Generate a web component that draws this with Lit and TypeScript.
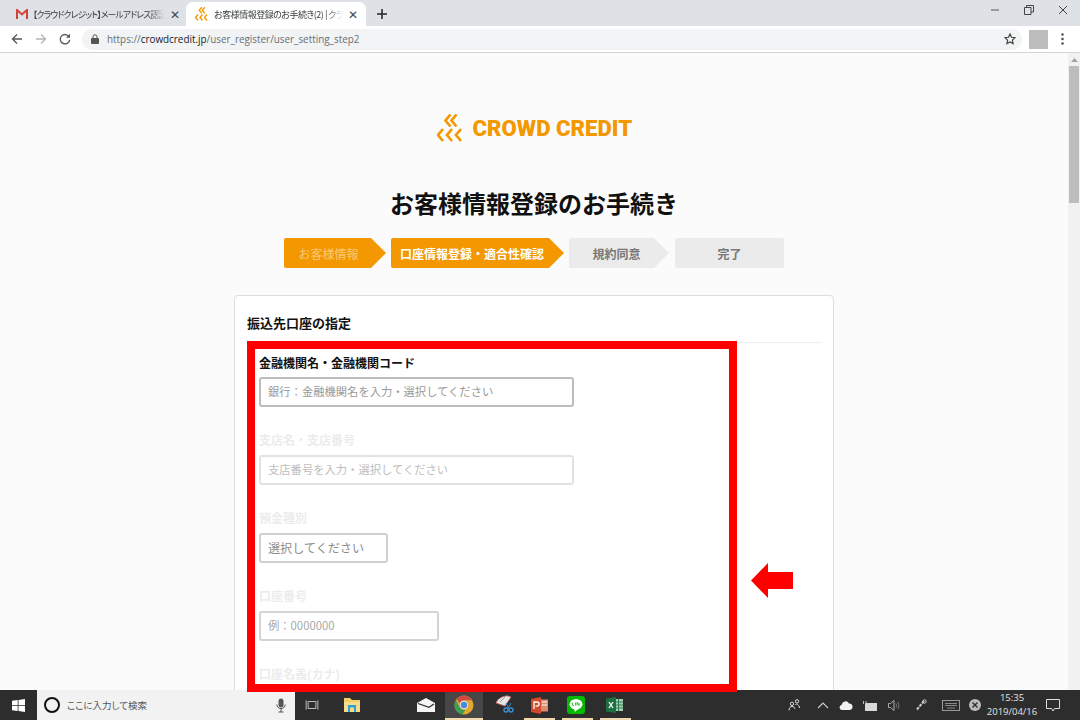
import { LitElement, html, css, svg } from "lit";
import { customElement } from "lit/decorators.js";

const logoMark = (w: number, h: number) => html`<svg width=${w} height=${h} viewBox="0 0 28 28">
  <g fill="none" stroke="#f39800" stroke-width="2.700">
    <path d="M13.500 .5L8.500 6.500l5 6M19.500 .5l-5 6 5 6" />
    <path d="M6 15L1 21l5 6M15 15l-5 6 5 6M24 15l-5 6 5 6" />
  </g>
</svg>`;

const gmail = html`<svg width="12" height="10" viewBox="0 0 12 10">
  <path d="M0 0h2v10H0zM10 0h2v10h-2z" fill="#c5453a" />
  <path d="M0 0h1.500L6 4 10.500 0H12v1.500L6 6.800 0 1.500z" fill="#d9473c" />
</svg>`;

const chromeIcon = html`<svg width="20" height="20" viewBox="0 0 20 20">
  <circle cx="10" cy="10" r="9.500" fill="#e0a92f" />
  <path d="M10 .5a9.500 9.500 0 0 1 8.200 4.700H10a5 5 0 0 0-4.500 2.800L2.600 3.900A9.500 9.500 0 0 1 10 .5z" fill="#cf4b3f" />
  <path d="M1.900 5a9.500 9.500 0 0 0 6.600 14.400l2.900-4.600a5 5 0 0 1-5.900-2.700z" fill="#3d9c58" />
  <circle cx="10" cy="10" r="4.200" fill="#e8e8e8" />
  <circle cx="10" cy="10" r="3.200" fill="#4a87e0" />
</svg>`;

const stroke = (d: unknown, w = 18, h = 18, vb = "0 0 18 18", c = "#c8c8c8") => html`<svg width=${w} height=${h} viewBox=${vb}>
  <g fill="none" stroke=${c} stroke-width="1.200">${d}</g>
</svg>`;

@customElement("app-root")
export class AppRoot extends LitElement {
  static styles = css`
    :host {
      display: flex;
      flex-direction: column;
      width: 1080px;
      height: 720px;
      overflow: hidden;
      position: relative;
      font-family: "Noto Sans CJK JP", "Noto Sans", sans-serif;
      color: #222;
    }

    /* browser chrome */
    .tabstrip {
      height: 26px;
      background: #dee1e6;
      display: flex;
      align-items: flex-end;
      flex: none;
    }
    .tab {
      height: 24px;
      width: 186px;
      box-sizing: border-box;
      display: flex;
      align-items: center;
      padding: 0 6px 0 16px;
      gap: 5px;
      font-size: 8.800px;
      letter-spacing: -0.850px;
      font-feature-settings: "palt";
      color: #3c4043;
      white-space: nowrap;
    }
    .tab.active {
      background: #fff;
      width: 180px;
      border-radius: 7px 7px 0 0;
      padding: 0 8px 0 9px;
      font-size: 9px;
      letter-spacing: -0.500px;
    }
    .tab .title {
      flex: 1;
      min-width: 0;
      -webkit-mask-image: linear-gradient(90deg, #000 88%, transparent);
      mask-image: linear-gradient(90deg, #000 88%, transparent);
    }
    .tab .close {
      font-size: 12px;
      line-height: 1;
      letter-spacing: 0;
      color: #44474b;
    }
    .newtab {
      width: 32px;
      height: 24px;
      display: flex;
      align-items: center;
      justify-content: center;
    }
    .winctl {
      margin-left: auto;
      display: flex;
      align-self: stretch;
    }
    .winctl div {
      width: 34px;
      display: flex;
      align-items: center;
      justify-content: center;
      padding-bottom: 6px;
    }
    .toolbar {
      height: 26px;
      background: #fff;
      border-bottom: 1px solid #d4d4d4;
      flex: none;
      display: flex;
      align-items: center;
      padding-left: 5px;
    }
    .navbtn {
      width: 24px;
      display: flex;
      justify-content: center;
    }
    .omni {
      margin-left: 5px;
      width: 940px;
      height: 21px;
      border-radius: 11px;
      background: #f1f3f4;
      display: flex;
      align-items: center;
      padding: 0 6px 0 9px;
      box-sizing: border-box;
      font-family: "Open Sans", sans-serif;
      font-size: 9.900px;
      color: #6b6f73;
      gap: 8px;
    }
    .omni b {
      font-weight: 400;
      color: #202124;
    }
    .omni .star {
      margin-left: auto;
    }
    .avatar {
      width: 19px;
      height: 19px;
      background: #bdbdbd;
      margin-left: 7px;
    }
    .dots {
      margin-left: 13px;
      display: flex;
    }

    /* page */
    .viewport {
      flex: 1;
      min-height: 0;
      display: flex;
      background: #fbfbfb;
    }
    .page {
      flex: 1;
      overflow: hidden;
      display: flex;
      flex-direction: column;
      align-items: center;
    }
    .page > * {
      flex: none;
    }
    .logo {
      margin-top: 59px;
      height: 32px;
      display: flex;
      align-items: center;
      gap: 8px;
    }
    .logo span {
      font-family: Roboto, sans-serif;
      font-weight: 900;
      font-size: 22.200px;
      color: #f39800;
      display: inline-block;
      width: 159px;
      white-space: nowrap;
    }
    h1 {
      margin: 41px 0 0;
      font-size: 24px;
      line-height: 36px;
      font-weight: 700;
      color: #111;
    }
    .steps {
      margin-top: 17px;
      display: flex;
      gap: 5px;
    }
    .step {
      height: 30px;
      box-sizing: border-box;
      display: flex;
      align-items: center;
      justify-content: center;
      font-size: 12px;
      font-weight: 700;
      border-radius: 2px;
      background: #ebebeb;
      color: #777;
      padding-right: 5px;
      clip-path: polygon(0 0, calc(100% - 15px) 0, 100% 50%, calc(100% - 15px) 100%, 0 100%);
    }
    .step.on {
      background: #f39800;
      color: #fff;
      padding-right: 11px;
    }
    .step.past {
      background: #f39800;
      color: #f9c877;
      font-weight: 400;
      padding-right: 13px;
    }
    .step.last {
      clip-path: none;
      padding-right: 0;
      margin-left: 1px;
    }
    .card {
      margin-top: 27px;
      width: 600px;
      min-height: 600px;
      box-sizing: border-box;
      background: #fff;
      border: 1px solid #ddd;
      border-radius: 4px;
      padding: 15px 12px 0;
    }
    h2 {
      margin: 0;
      font-size: 13px;
      line-height: 24px;
      font-weight: 700;
      color: #111;
      padding-bottom: 7px;
      border-bottom: 1px solid #eee;
    }
    .fields {
      padding: 9px 12px 0;
      display: flex;
      flex-direction: column;
      gap: 23px;
    }
    .field {
      display: flex;
      flex-direction: column;
      gap: 5px;
      align-items: flex-start;
    }
    .field:first-child {
      gap: 4px;
      padding-top: 1px;
    }
    .field label {
      font-size: 12px;
      line-height: 20px;
      font-weight: 700;
      color: #111;
    }
    .field.dim label {
      color: #ececec;
    }
    .input {
      height: 30px;
      box-sizing: border-box;
      border: 2px solid #bcbcbc;
      border-radius: 3px;
      padding: 0 7px 2px;
      display: flex;
      align-items: center;
      font-size: 11.300px;
      color: #9a9a9a;
      background: #fff;
    }
    .field.dim .input {
      border-color: #e2e2e2;
      color: #bdbdbd;
    }
    .w1 {
      width: 315px;
    }
    .w2 {
      width: 129px;
      font-size: 12.100px;
    }
    .field.dim .w2 {
      border-color: #cfcfcf;
      color: #8d8d8d;
    }
    .w3 {
      width: 180px;
    }
    .field.dim .w3 {
      border-color: #d4d4d4;
      color: #a8a8a8;
    }

    .scrollbar {
      width: 12px;
      background: #f1f1f1;
      flex: none;
      padding: 0 1px;
      box-sizing: border-box;
    }
    .scrollbar .up {
      height: 13px;
      display: flex;
      align-items: center;
      justify-content: center;
    }
    .scrollbar .thumb {
      height: 137px;
      background: #bdbdbd;
    }

    /* annotation */
    .redbox {
      position: absolute;
      left: 247px;
      top: 341px;
      width: 490px;
      height: 351px;
      box-sizing: border-box;
      border: 8px solid #f00;
      z-index: 3;
    }
    .arrow {
      position: absolute;
      left: 751px;
      top: 563px;
      z-index: 3;
    }

    /* taskbar */
    .taskbar {
      height: 30px;
      flex: none;
      background: #2d2d2d;
      display: flex;
      align-items: center;
      position: relative;
    }
    .start {
      width: 37px;
      display: flex;
      justify-content: center;
    }
    .search {
      width: 258px;
      height: 30px;
      background: #f2f2f2;
      box-sizing: border-box;
      display: flex;
      align-items: center;
      padding: 0 9px 0 7px;
      font-size: 9.500px;
      font-feature-settings: "palt";
      color: #555;
      gap: 6px;
    }
    .search .ring {
      width: 12px;
      height: 12px;
      border: 2.500px solid #111;
      border-radius: 50%;
      margin-right: 1px;
    }
    .search .mic {
      margin-left: auto;
      display: flex;
    }
    .cell {
      width: 38px;
      height: 30px;
      display: flex;
      align-items: center;
      justify-content: center;
      box-sizing: border-box;
      position: relative;
    }
    .cell.open::after {
      content: "";
      position: absolute;
      left: 3px;
      right: 4px;
      bottom: 0;
      height: 2px;
      background: #f5d9ae;
    }
    .cell.active {
      background: #474747;
    }
    .cell.active::after {
      left: 0;
      right: 0;
    }
    .folder {
      margin-right: 36px;
    }
    .tray {
      margin-left: auto;
      display: flex;
      align-items: center;
      color: #e6e6e6;
    }
    .tray .t {
      display: flex;
      justify-content: center;
      width: 24px;
    }
    .clock {
      width: 56px;
      font-family: "Open Sans", sans-serif;
      font-size: 9.500px;
      line-height: 14px;
      text-align: center;
      color: #e4e4e4;
    }
    .notif {
      width: 26px;
      margin-right: 14px;
      display: flex;
      justify-content: center;
    }
  `;

  render() {
    return html`
      <div class="tabstrip">
        <div class="tab">
          ${gmail}
          <span class="title">【クラウドクレジット】メールアドレス認証</span>
          <span class="close">✕</span>
        </div>
        <div class="tab active">
          ${logoMark(14, 14)}
          <span class="title">お客様情報登録のお手続き(2) | クラ</span>
          <span class="close">✕</span>
        </div>
        <div class="newtab">
          <svg width="12" height="12" viewBox="0 0 12 12"><path d="M6 1v10M1 6h10" stroke="#222" stroke-width="1.500" /></svg>
        </div>
        <div class="winctl">
          <div><svg width="10" height="10" viewBox="0 0 10 10"><path d="M1 5h8" stroke="#555" /></svg></div>
          <div><svg width="10" height="10" viewBox="0 0 10 10"><path d="M.5 2.500h6.500v7H.5zM2.500 2.500V.5h7v6.500H7" fill="none" stroke="#444" /></svg></div>
          <div><svg width="10" height="10" viewBox="0 0 10 10"><path d="M1 1l8 8M9 1l-8 8" stroke="#444" /></svg></div>
        </div>
      </div>
      <div class="toolbar">
        <div class="navbtn"><svg width="12" height="12" viewBox="0 0 12 12"><path d="M11 6H2M6 1.500L1.500 6 6 10.500" fill="none" stroke="#555" stroke-width="1.300" /></svg></div>
        <div class="navbtn"><svg width="12" height="12" viewBox="0 0 12 12"><path d="M1 6h9M6 1.500L10.500 6 6 10.500" fill="none" stroke="#b5b5b5" stroke-width="1.300" /></svg></div>
        <div class="navbtn"><svg width="12" height="12" viewBox="0 0 12 12"><path d="M10.200 4A4.700 4.700 0 1 0 10.700 6.800" fill="none" stroke="#555" stroke-width="1.300" /><path d="M11 .8v4H7z" fill="#555" /></svg></div>
        <div class="omni">
          <svg width="8" height="10" viewBox="0 0 8 10"><path d="M2 4V2.800a2 2 0 0 1 4 0V4" fill="none" stroke="#555" /><rect y="4" width="8" height="6" rx="1" fill="#555" /></svg>
          <span>https://<b>crowdcredit.jp</b>/user_register/user_setting_step2</span>
          <svg class="star" width="12" height="12" viewBox="0 0 12 12"><path d="M6 1l1.500 3.300 3.500.4-2.600 2.400.7 3.500L6 8.900l-3.100 1.700.7-3.500L1 4.700l3.500-.4z" fill="none" stroke="#444" stroke-width="1.200" /></svg>
        </div>
        <div class="avatar"></div>
        <div class="dots"><svg width="3" height="12" viewBox="0 0 3 12"><circle cx="1.500" cy="1.500" r="1.300" fill="#555" /><circle cx="1.500" cy="6" r="1.300" fill="#555" /><circle cx="1.500" cy="10.500" r="1.300" fill="#555" /></svg></div>
      </div>

      <div class="viewport">
        <div class="page">
          <div class="logo">
            ${logoMark(28, 28)}
            <span>CROWD CREDIT</span>
          </div>
          <h1>お客様情報登録のお手続き</h1>
          <div class="steps">
            <div class="step past" style="width:102px">お客様情報</div>
            <div class="step on" style="width:173px">口座情報登録・適合性確認</div>
            <div class="step" style="width:100px">規約同意</div>
            <div class="step last" style="width:109px">完了</div>
          </div>
          <div class="card">
            <h2>振込先口座の指定</h2>
            <div class="fields">
              <div class="field">
                <label>金融機関名・金融機関コード</label>
                <div class="input w1">銀行：金融機関名を入力・選択してください</div>
              </div>
              <div class="field dim">
                <label>支店名・支店番号</label>
                <div class="input w1">支店番号を入力・選択してください</div>
              </div>
              <div class="field dim">
                <label>預金種別</label>
                <div class="input w2">選択してください</div>
              </div>
              <div class="field dim">
                <label>口座番号</label>
                <div class="input w3">例：0000000</div>
              </div>
              <div class="field dim">
                <label>口座名義(カナ)</label>
              </div>
            </div>
          </div>
        </div>
        <div class="scrollbar">
          <div class="up"><svg width="7" height="4" viewBox="0 0 7 4"><path d="M3.500 0L7 4H0z" fill="#a3a3a3" /></svg></div>
          <div class="thumb"></div>
        </div>
      </div>

      <div class="taskbar">
        <div class="start">
          <svg width="13" height="13" viewBox="0 0 13 13"><path d="M0 1.800L5.700 1v5.200H0zM6.500.9L13 0v6.200H6.500zM0 6.900h5.700V12L0 11.200zM6.500 6.900H13V13l-6.500-.9z" fill="#fff" /></svg>
        </div>
        <div class="search">
          <div class="ring"></div>
          <span>ここに入力して検索</span>
          <span class="mic"><svg width="10" height="15" viewBox="0 0 10 15"><rect x="2.500" y="0.500" width="5" height="9" rx="2.500" fill="#555" /><path d="M.8 6.500a4.200 4.200 0 0 0 8.400 0M5 11v3M2.500 14h5" fill="none" stroke="#555" /></svg></span>
        </div>
        <div class="cell" style="width:33px">
          ${stroke(svg`<path d="M4 4.500h10v9H4zM1.500 3v12M16.500 3v12" />`, 14, 14)}
        </div>
        <div class="cell folder" style="margin-left:5px">
          <svg width="16" height="14" viewBox="0 0 16 14"><path d="M0 0h6l2 2h8v12H0z" fill="#f3cf6a" /><path d="M0 4h16v10H0z" fill="#f8dc8a" /><path d="M4 7h8v7H4z" fill="#2f9fd8" /><path d="M6 9.500h4V14H6z" fill="#f8dc8a" /></svg>
        </div>
        <div class="cell">
          <svg width="18" height="14" viewBox="0 0 18 14"><path d="M0 5l9-5 9 5v9H0z" fill="#f4f4f4" /><path d="M1 5.500l11 3.800L17 6" fill="none" stroke="#2d2d2d" stroke-width="1.300" /></svg>
        </div>
        <div class="cell open active">${chromeIcon}</div>
        <div class="cell" style="padding-left:6px">
          <svg width="20" height="20" viewBox="0 0 20 20"><path d="M1 8a9 6 -25 0 1 15-6l-6 9z" fill="#e6e6e6" stroke="#c25a5a" stroke-width=".8" /><path d="M5 7l5-5" stroke="#999" /><circle cx="11" cy="15" r="2" fill="none" stroke="#3a8fd0" stroke-width="1.400" /><circle cx="16" cy="15" r="2" fill="none" stroke="#3a8fd0" stroke-width="1.400" /><path d="M11 8l2.500 5M16 8l-2.500 5" stroke="#3a8fd0" /></svg>
        </div>
        <div class="cell open" style="padding-right:2px">
          <svg width="17" height="17" viewBox="0 0 17 17"><path d="M0 2l10-2v17L0 15z" fill="#d04a2b" /><path d="M10 2.500h7v12h-7z" fill="#e08a70" /><path d="M11 5h5M11 8h5" stroke="#fff" /><path d="M3 12V5h3a2 2 0 0 1 0 4.200H4.500" fill="none" stroke="#fff" stroke-width="1.300" /></svg>
        </div>
        <div class="cell open" style="padding-right:4px">
          <svg width="18" height="18" viewBox="0 0 18 18"><rect width="18" height="18" rx="3" fill="#00b900" /><ellipse cx="9" cy="8.300" rx="6.500" ry="5.300" fill="#fff" /><path d="M7 13l1 3 3-3z" fill="#fff" /><path d="M5.500 6.500v3h1.500M8.500 6.500v3M10 9.500v-3l2 3v-3" fill="none" stroke="#00b900" stroke-width=".8" /></svg>
        </div>
        <div class="cell open" style="padding-right:4px">
          <svg width="17" height="16" viewBox="0 0 17 16"><path d="M0 1.500l10-1.500v16L0 14.500z" fill="#1d6f42" /><path d="M10 2h7v12h-7z" fill="#a4cdb3" /><path d="M12.500 2v12M10 5h7M10 8h7M10 11h7" stroke="#1d6f42" stroke-width=".8" /><path d="M3 5l4 6M7 5l-4 6" stroke="#fff" stroke-width="1.300" /></svg>
        </div>

        <div class="tray">
          <span class="t" style="margin-right:6px">${stroke(svg`<circle cx="6" cy="7" r="2" /><circle cx="12" cy="4" r="2" /><path d="M2.500 15c0-3 1.500-5 3.500-5s3 1.500 3.500 3M10 8c1-1 2-1 3 0s2 2 2 4" />`, 15, 15, "0 0 18 18", "#ddd")}</span>
          <span class="t" style="width:22px"><svg width="12" height="7" viewBox="0 0 12 7"><path d="M1 6l5-5 5 5" fill="none" stroke="#ccc" stroke-width="1.100" /></svg></span>
          <span class="t"><svg width="14" height="9" viewBox="0 0 14 9"><path d="M3 9a2.600 2.600 0 0 1-.5-5.100 4 4 0 0 1 7.500-1.400A3.300 3.300 0 0 1 11 9z" fill="#f2f2f2" /></svg></span>
          <span class="t"><svg width="14" height="11" viewBox="0 0 14 11"><path d="M2 3h12v8H2z" fill="#d9d9d9" /><path d="M.5 1v3M3 1v3" stroke="#bbb" /></svg></span>
          <span class="t"><svg width="12" height="11" viewBox="0 0 12 11"><path d="M.5 3.500h2L6 .5v10l-3.500-3h-2z" fill="none" stroke="#aaa" /><path d="M8 3.500q1.200 2 0 4M10 2q2 3.500 0 7" fill="none" stroke="#777" /></svg></span>
          <span class="t" style="width:30px"><svg width="12" height="12" viewBox="0 0 12 12"><path d="M2 10.500L9 2" stroke="#ccc" stroke-width="2" stroke-dasharray="3 1" /><circle cx="9.500" cy="2.500" r="1.700" fill="none" stroke="#ccc" /></svg></span>
          <span class="t" style="width:30px"><svg width="18" height="11" viewBox="0 0 18 11"><rect x=".5" y=".5" width="17" height="10" fill="none" stroke="#999" /><path d="M3 3.500h12M3 5.500h12M5 8h8" stroke="#888" /></svg></span>
          <span class="t" style="width:18px"><svg width="12" height="12" viewBox="0 0 12 12"><circle cx="6" cy="6" r="6" fill="#bbb" /><path d="M3.500 3.500l5 5M8.500 3.500l-5 5" stroke="#2d2d2d" stroke-width="1.400" /></svg></span>
          <span class="clock">15:35<br />2019/04/16</span>
          <span class="notif"><svg width="14" height="13" viewBox="0 0 14 13"><path d="M.5.500h13v9H8.500l-1.500 2.500-1.500-2.500H.5z" fill="none" stroke="#ddd" /></svg></span>
        </div>
      </div>

      <div class="redbox"></div>
      <svg class="arrow" width="42" height="35" viewBox="0 0 42 35">
        <path d="M0 17.500L17 0v9h25v17H17v9z" fill="#f00" />
      </svg>
    `;
  }
}
